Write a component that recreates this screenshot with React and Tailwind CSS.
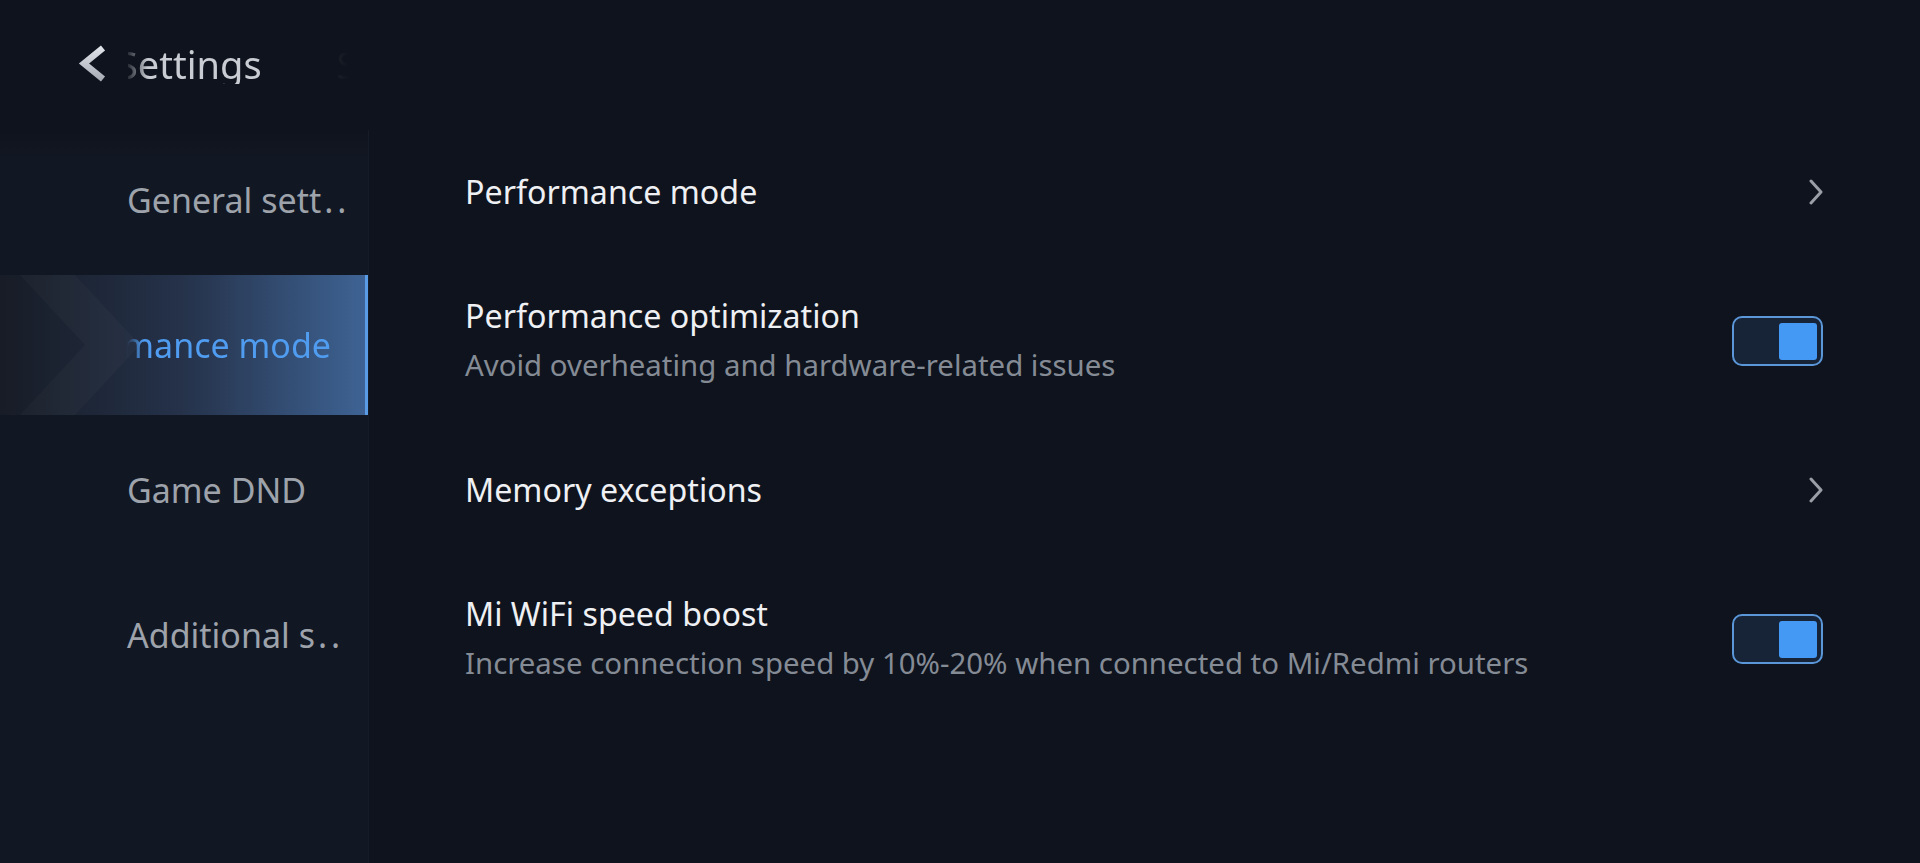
import { useState } from "react";

const menu = [
  { id: "general", label: "General sett", dots: true },
  { id: "perf", label: "Performance mode" },
  { id: "dnd", label: "Game DND" },
  { id: "extra", label: "Additional s", dots: true },
];

function Toggle({ on, onClick }) {
  return (
    <button
      onClick={onClick}
      className="w-[91px] h-[50px] rounded-[10px] border-2 border-[#5a96d8] bg-[#172336] flex items-center justify-end pr-[4px] shrink-0"
    >
      {on && <div className="w-[38px] h-[37px] rounded-[3px] bg-[#4499f5]" />}
    </button>
  );
}

function Chevron() {
  return (
    <svg width="16" height="26" viewBox="0 0 16 26" className="shrink-0 mr-[-1px]">
      <polyline
        points="3,2 13,13 3,24"
        fill="none"
        stroke="#9a9ea6"
        strokeWidth="3"
        strokeLinecap="round"
        strokeLinejoin="round"
      />
    </svg>
  );
}

function Row({ title, sub, right }) {
  return (
    <div className="flex items-center justify-between">
      <div className="flex flex-col">
        <div className="text-[32.2px] leading-[48px] text-[#eef0f3]">{title}</div>
        {sub && <div className="text-[29.4px] leading-[50px] text-[#858b95]">{sub}</div>}
      </div>
      {right}
    </div>
  );
}

export default function App() {
  const [active] = useState("perf");
  const [optim, setOptim] = useState(true);
  const [boost, setBoost] = useState(true);

  return (
    <div className="w-[1920px] h-[863px] bg-[#0e131d] flex flex-col overflow-hidden font-['Noto_Sans',sans-serif]">
      {/* header */}
      <div className="h-[130px] flex items-start pt-[44px] pl-[78px] shrink-0">
        <svg width="30" height="40" viewBox="0 0 30 40" className="shrink-0">
          <defs>
            <linearGradient id="bk" x1="0" y1="0" x2="0" y2="1">
              <stop offset="0" stopColor="#dfe2e8" />
              <stop offset="1" stopColor="#a9adb6" />
            </linearGradient>
          </defs>
          <polyline
            points="25,4 6,19.5 25,35"
            fill="none"
            stroke="url(#bk)"
            strokeWidth="6.5"
            strokeLinejoin="miter"
          />
        </svg>
        <div className="ml-[20px] w-[222px] h-[40px] overflow-hidden [mask-image:linear-gradient(to_right,rgba(0,0,0,0.15)_0px,black_20px,black_150px,rgba(0,0,0,0.12)_195px,transparent_222px)]">
          <div className="flex gap-[75px] -ml-[11px] whitespace-nowrap text-[38px] leading-[40px] text-[#c9ccd2]">
            <span>Settings</span>
            <span>Settings</span>
          </div>
        </div>
      </div>

      {/* body */}
      <div className="flex flex-1 min-h-0">
        <div className="w-[369px] shrink-0 bg-gradient-to-b from-[#0e131d] to-[#121823] to-[30px] border-r border-[#161c27] flex flex-col gap-[5px]">
          {menu.map((m) =>
            m.id === active ? (
              <div
                key={m.id}
                className="relative h-[140px] flex items-center bg-gradient-to-r from-[#171c26] via-[#25324a] to-[#3e6394] border-r-[3px] border-[#5a9be6] overflow-hidden"
              >
                <svg
                  width="160"
                  height="140"
                  viewBox="0 0 160 140"
                  className="absolute left-0 top-0"
                >
                  <polygon points="20,0 75,0 140,70 75,140 20,140 85,70" fill="#ffffff" fillOpacity="0.025" />
                </svg>
                <div className="relative ml-[127px] w-[204px] overflow-hidden flex justify-end [mask-image:linear-gradient(to_right,transparent_0px,black_16px)]">
                  <span className="whitespace-nowrap text-[34px] leading-[44px] text-[#4f9cf0]">{m.label}</span>
                </div>
              </div>
            ) : (
              <div key={m.id} className="h-[140px] flex items-center pl-[127px]">
                <span className="whitespace-nowrap text-[34px] leading-[44px] text-[#9ea3ab]">
                  {m.label}
                  {m.dots && <span className="tracking-[4px] ml-[3px]">..</span>}
                </span>
              </div>
            )
          )}
        </div>

        <div className="flex-1 pl-[96px] pr-[97px] pt-[38px] flex flex-col gap-[76px]">
          <Row title="Performance mode" right={<Chevron />} />
          <Row
            title="Performance optimization"
            sub="Avoid overheating and hardware-related issues"
            right={<Toggle on={optim} onClick={() => setOptim(!optim)} />}
          />
          <Row title="Memory exceptions" right={<Chevron />} />
          <Row
            title="Mi WiFi speed boost"
            sub="Increase connection speed by 10%-20% when connected to Mi/Redmi routers"
            right={<Toggle on={boost} onClick={() => setBoost(!boost)} />}
          />
        </div>
      </div>
    </div>
  );
}
